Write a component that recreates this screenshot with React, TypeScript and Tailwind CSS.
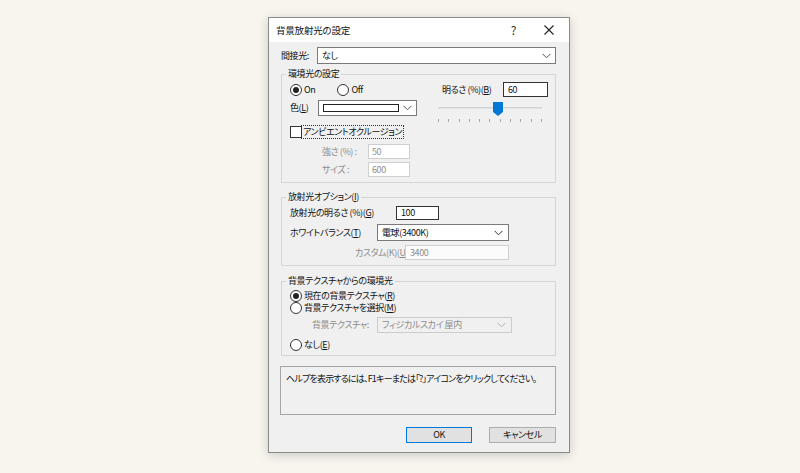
import React from "react";

const Chevron = ({ color = "#555" }: { color?: string }) => (
  <svg width="9" height="6" viewBox="0 0 9 6" className="shrink-0">
    <polyline points="0.5,0.8 4.5,4.8 8.5,0.8" fill="none" stroke={color} strokeWidth="1" />
  </svg>
);

const Radio = ({ on = false }: { on?: boolean }) => (
  <span className="w-[12px] h-[12px] rounded-full border border-[#333] bg-white flex items-center justify-center shrink-0">
    {on && <span className="w-[6px] h-[6px] rounded-full bg-[#222]" />}
  </span>
);

const U = ({ c }: { c: string }) => <span className="underline underline-offset-1">{c}</span>;

export default function App() {
  return (
    <div className="w-[800px] h-[473px] bg-[#f7f5ee] pt-[17px] font-['Noto_Sans_CJK_JP',sans-serif] text-[9px] leading-[14px] tracking-[-0.4px] text-[#111] whitespace-nowrap [font-feature-settings:'palt']">
      <div className="ml-[268px] w-[302px] h-[436px] border border-[#8a8a8a] bg-[#f0f0f0] shadow-[0_2px_10px_rgba(0,0,0,0.18)] flex flex-col">
        {/* title bar */}
        <div className="h-[24px] bg-white flex items-center pl-[7px] shrink-0">
          <span className="text-[9.5px] tracking-[-0.2px]">背景放射光の設定</span>
          <span className="ml-auto mr-[28px] text-[12px] text-[#333]">?</span>
          <svg width="10" height="10" viewBox="0 0 10 10" className="mr-[15px]">
            <path d="M0.5 0.5 L9.5 9.5 M9.5 0.5 L0.5 9.5" stroke="#222" strokeWidth="1.1" />
          </svg>
        </div>

        <div className="flex flex-col pl-[12px] pr-[13px]">
          {/* 間接光 */}
          <div className="mt-[5px] flex items-center h-[17px]">
            <span className="w-[36px]">間接光:</span>
            <div className="flex-1 h-[17px] border border-[#7a7a7a] bg-white flex items-center pl-[4px] pr-[4px]">
              <span>なし</span>
              <span className="ml-auto"><Chevron /></span>
            </div>
          </div>

          {/* group 1 */}
          <fieldset className="mt-[3px] border border-[#d5d5d5] pb-[5px]">
            <legend className="ml-[4px] px-[2px]">環境光の設定</legend>
            <div className="flex">
              <div className="flex flex-col pl-[8px] w-[155px]">
                <div className="mt-[1px] h-[15px] flex items-center">
                  <Radio on />
                  <span className="ml-[2px]">On</span>
                  <span className="ml-[22px]"><Radio /></span>
                  <span className="ml-[2px]">Off</span>
                </div>
                <div className="mt-[3px] h-[16px] flex items-center">
                  <span className="w-[28px]">色(<U c="L" />)</span>
                  <div className="w-[99px] h-[16px] border border-[#7a7a7a] bg-white flex items-center pl-[4px] pr-[4px]">
                    <span className="w-[76px] h-[8px] border border-[#222] bg-white" />
                    <span className="ml-auto"><Chevron /></span>
                  </div>
                </div>
                <div className="mt-[9px] h-[14px] flex items-center">
                  <span className="w-[12px] h-[12px] border border-[#333] bg-white shrink-0" />
                  <span className="ml-[-1px] h-[14px] px-[1px] border border-dotted border-[#333] flex items-center">アンビエントオクルージョン</span>
                </div>
                <div className="mt-[5px] h-[15px] flex items-center text-[#8c8c8c]">
                  <span className="ml-[32px] w-[46px]">強さ (%) :</span>
                  <div className="w-[42px] h-[15px] border border-[#cfcfcf] bg-white flex items-center pl-[3px]">50</div>
                </div>
                <div className="mt-[3px] h-[15px] flex items-center text-[#8c8c8c]">
                  <span className="ml-[32px] w-[46px]">サイズ :</span>
                  <div className="w-[42px] h-[15px] border border-[#cfcfcf] bg-white flex items-center pl-[3px]">600</div>
                </div>
              </div>

              <div className="flex flex-col pl-[1px]">
                <div className="mt-[1px] h-[15px] flex items-center">
                  <span className="ml-[4px] w-[61px]">明るさ (%)(<U c="B" />)</span>
                  <div className="w-[45px] h-[15px] border border-[#333] bg-white flex items-center pl-[4px]">60</div>
                </div>
                <div className="relative mt-[5px] w-[104px] h-[20px]">
                  <div className="absolute left-0 right-0 top-[5px] h-[2px] bg-[#e3e3e3] border-t border-[#d3d3d3]" />
                  <svg width="10" height="14" viewBox="0 0 10 14" className="absolute left-[55px] top-0">
                    <path d="M0 0 H10 V10 L5 14 L0 10 Z" fill="#0078d7" />
                  </svg>
                  <div className="absolute left-0 right-0 bottom-0 h-[3px] flex justify-between">
                    {Array.from({ length: 11 }).map((_, i) => (
                      <span key={i} className="w-[1px] h-[3px] bg-[#a8a8a8]" />
                    ))}
                  </div>
                </div>
              </div>
            </div>
          </fieldset>

          {/* group 2 */}
          <fieldset className="mt-[7px] border border-[#d5d5d5] pb-[5px]">
            <legend className="ml-[4px] px-[2px]">放射光オプション(<U c="I" />)</legend>
            <div className="flex flex-col pl-[8px]">
              <div className="mt-[2px] h-[14px] flex items-center">
                <span className="w-[106px]">放射光の明るさ (%)(<U c="G" />)</span>
                <div className="w-[43px] h-[14px] border border-[#333] bg-white flex items-center pl-[4px]">100</div>
              </div>
              <div className="mt-[4px] h-[17px] flex items-center">
                <span className="w-[87px]">ホワイトバランス(<U c="T" />)</span>
                <div className="w-[132px] h-[17px] border border-[#7a7a7a] bg-white flex items-center pl-[4px] pr-[5px]">
                  <span>電球(3400K)</span>
                  <span className="ml-auto"><Chevron color="#333" /></span>
                </div>
              </div>
              <div className="mt-[4px] h-[15px] flex items-center text-[#8c8c8c]">
                <span className="ml-[65px] w-[50px]">カスタム(K)(<U c="U" />)</span>
                <div className="w-[104px] h-[15px] border border-[#d0d0d0] bg-[#fbfbfb] flex items-center pl-[4px]">3400</div>
              </div>
            </div>
          </fieldset>

          {/* group 3 */}
          <fieldset className="mt-[8px] border border-[#d5d5d5] pb-[4px]">
            <legend className="ml-[4px] px-[2px]">背景テクスチャからの環境光</legend>
            <div className="flex flex-col pl-[8px]">
              <div className="mt-[2px] h-[12px] flex items-center">
                <Radio on />
                <span className="ml-[2px]">現在の背景テクスチャ(<U c="R" />)</span>
              </div>
              <div className="h-[12px] flex items-center">
                <Radio />
                <span className="ml-[2px]">背景テクスチャを選択(<U c="M" />)</span>
              </div>
              <div className="mt-[3px] h-[16px] flex items-center text-[#8c8c8c]">
                <span className="ml-[22px] w-[65px]">背景テクスチャ:</span>
                <div className="w-[135px] h-[16px] border border-[#cccccc] bg-[#f0f0f0] flex items-center pl-[4px] pr-[5px]">
                  <span>フィジカルスカイ 屋内</span>
                  <span className="ml-auto"><Chevron color="#b5b5b5" /></span>
                </div>
              </div>
              <div className="mt-[6px] h-[12px] flex items-center">
                <Radio />
                <span className="ml-[2px]">なし(<U c="E" />)</span>
              </div>
            </div>
          </fieldset>

          {/* help */}
          <div className="mt-[10px] ml-[-1px] h-[49px] border border-[#a5a5a5] bg-[#f0f0f0] pl-[5px] pt-[5px] tracking-[-0.8px]">
            ヘルプを表示するには、F1キーまたは「?」アイコンをクリックしてください。
          </div>

          {/* buttons */}
          <div className="mt-[12px] flex justify-end">
            <div className="w-[66px] h-[16px] border border-[#0078d7] bg-[#e1e1e1] flex items-center justify-center">OK</div>
            <div className="ml-[17px] w-[67px] h-[16px] border border-[#adadad] bg-[#e1e1e1] flex items-center justify-center">キャンセル</div>
          </div>
        </div>
      </div>
    </div>
  );
}
